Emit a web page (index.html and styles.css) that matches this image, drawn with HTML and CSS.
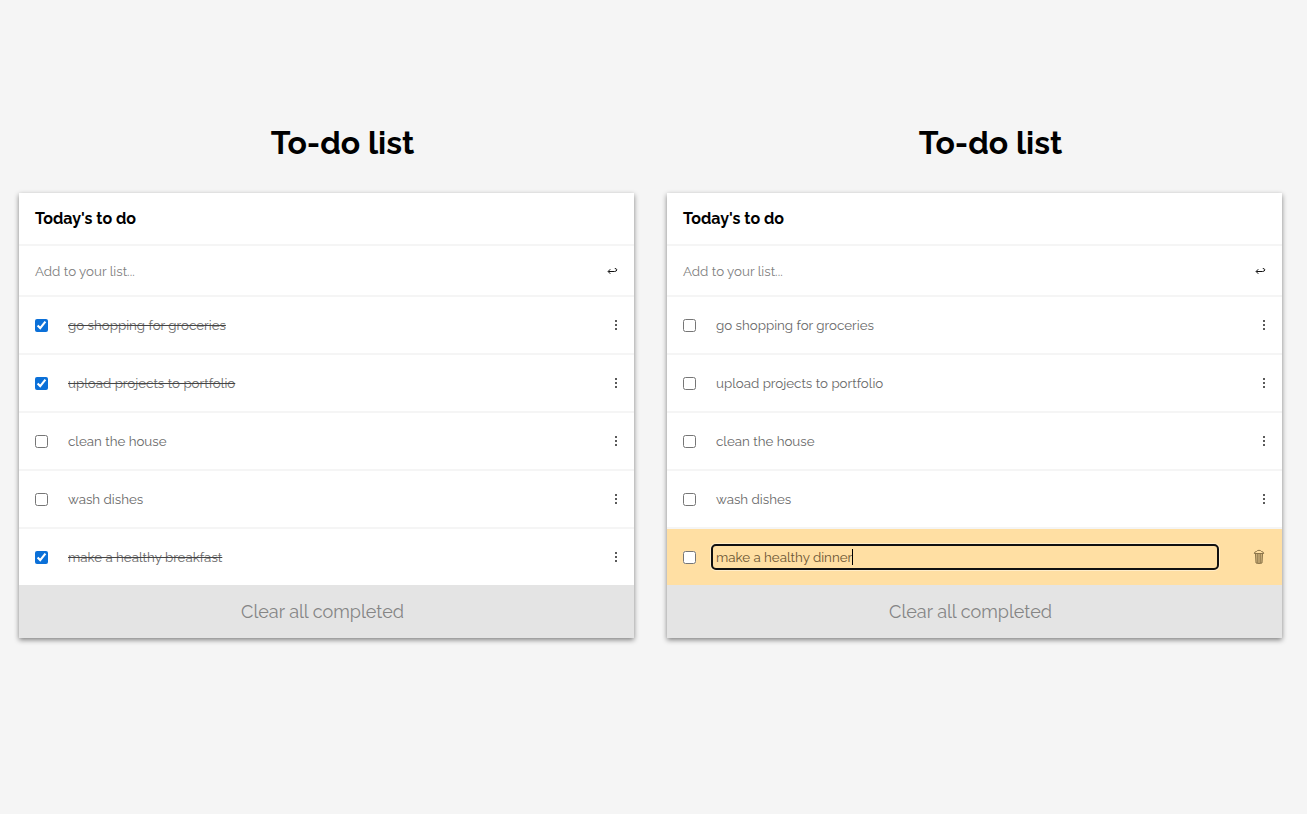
FILE: index.html
```html
<!DOCTYPE html>
<html lang="en">
<head>
<meta charset="utf-8">
<title>To-do list</title>
<link rel="stylesheet" href="styles.css">
</head>
<body>
<svg class="defs" width="0" height="0">
  <symbol id="enter" viewBox="0 0 12 10"><path d="M4.3 3.2 2.1 5.5 4.3 7.8M2.3 5.5H8.6Q10.8 5.3 10.8 3.8 10.6 2.5 8.8 2.5" fill="none" stroke="#111" stroke-width="1"/></symbol>
  <symbol id="dots" viewBox="0 0 4 12"><path d="M1 1h2v2H1zM1 5h2v2H1zM1 9h2v2H1z" fill="#5a5a5a"/></symbol>
  <symbol id="trash" viewBox="0 0 12 16"><path d="M2.3 4.5 3 14Q6 15.2 9 14L9.7 4.5Z" fill="#cfb37c"/><path d="M1.3 4.8Q1.3 2.5 3.5 2.5 4 1.3 6 1.3T8.5 2.5Q10.7 2.5 10.7 4.8M1.5 4.5H10.5M2.5 5 3 14Q6 15 9 14L9.5 5M4.8 5V14M7.2 5V14" fill="none" stroke="#8c754a" stroke-width="1"/></symbol>
</svg>
<main class="lists">
  <section class="list">
    <h1 class="title">To-do list</h1>
    <div class="card">
      <h2 class="heading">Today's to do</h2>
      <div class="add"><span>Add to your list...</span><svg class="enter"><use href="#enter"/></svg></div>
      <ul class="items">
        <li class="item done"><input type="checkbox" checked><span class="label">go shopping for groceries</span><svg class="dots"><use href="#dots"/></svg></li>
        <li class="item done"><input type="checkbox" checked><span class="label">upload projects to portfolio</span><svg class="dots"><use href="#dots"/></svg></li>
        <li class="item"><input type="checkbox"><span class="label">clean the house</span><svg class="dots"><use href="#dots"/></svg></li>
        <li class="item"><input type="checkbox"><span class="label">wash dishes</span><svg class="dots"><use href="#dots"/></svg></li>
        <li class="item done"><input type="checkbox" checked><span class="label">make a healthy breakfast</span><svg class="dots"><use href="#dots"/></svg></li>
      </ul>
      <div class="clear">Clear all completed</div>
    </div>
  </section>
  <section class="list">
    <h1 class="title">To-do list</h1>
    <div class="card">
      <h2 class="heading">Today's to do</h2>
      <div class="add"><span>Add to your list...</span><svg class="enter"><use href="#enter"/></svg></div>
      <ul class="items">
        <li class="item"><input type="checkbox"><span class="label">go shopping for groceries</span><svg class="dots"><use href="#dots"/></svg></li>
        <li class="item"><input type="checkbox"><span class="label">upload projects to portfolio</span><svg class="dots"><use href="#dots"/></svg></li>
        <li class="item"><input type="checkbox"><span class="label">clean the house</span><svg class="dots"><use href="#dots"/></svg></li>
        <li class="item"><input type="checkbox"><span class="label">wash dishes</span><svg class="dots"><use href="#dots"/></svg></li>
        <li class="item editing"><input type="checkbox"><div class="field"><span class="label">make a healthy dinner</span><i class="caret"></i></div><svg class="trash"><use href="#trash"/></svg></li>
      </ul>
      <div class="clear">Clear all completed</div>
    </div>
  </section>
</main>
</body>
</html>
```
FILE: styles.css
```css
* { box-sizing: border-box; }
body { margin: 0; height: 814px; background: #f5f5f5; font-family: Raleway, Lato, sans-serif; overflow: hidden; }
.defs { display: block; }
.lists { display: flex; gap: 33px; padding: 121px 0 0 19px; }
.list { width: 615px; }
.title { margin: 0 0 28px; padding-left: 32px; text-align: center; font-size: 32px; line-height: 44px; font-weight: 700; color: #000; }
.card { background: #fff; box-shadow: 0 2px 5px rgba(0, 0, 0, .48); }
.heading { margin: 0; height: 53px; padding: 0 16px; border-bottom: 2px solid #f5f5f5; font-size: 16px; line-height: 51px; font-weight: 700; color: #000; }
.add { display: flex; align-items: center; justify-content: space-between; height: 51px; padding: 0 16px; border-bottom: 2px solid #f5f5f5; font-size: 13.33px; color: #808080; }
.enter { width: 12px; height: 10px; }
.items { margin: 0; padding: 0; list-style: none; }
.item { display: flex; align-items: center; height: 58px; padding: 0 16px; border-bottom: 2px solid #f5f5f5; font-size: 13.33px; color: #696969; }
.item:last-child { height: 56px; border-bottom: 0; }
.item input { flex: none; width: 13px; height: 13px; margin: 0 20px 0 0; accent-color: #0b70d8; }
.label { white-space: nowrap; }
.done .label { text-decoration: line-through; text-decoration-color: #444; }
.dots { width: 4px; height: 12px; margin-left: auto; }
.editing { background: #ffdfa3; color: #6b5634; }
.item.editing input { margin-right: 15px; }
.field { display: flex; align-items: center; width: 508px; height: 26px; padding-left: 3px; border: 2px solid #101010; border-radius: 5px; box-shadow: 0 0 0 1px #ffedc9; }
.caret { width: 1px; height: 16px; background: #000; }
.trash { width: 12px; height: 16px; margin: 0 1px 0 auto; }
.clear { height: 53px; padding-right: 8px; background: #e4e4e4; text-align: center; font-size: 18px; line-height: 53px; color: #858585; }
```
